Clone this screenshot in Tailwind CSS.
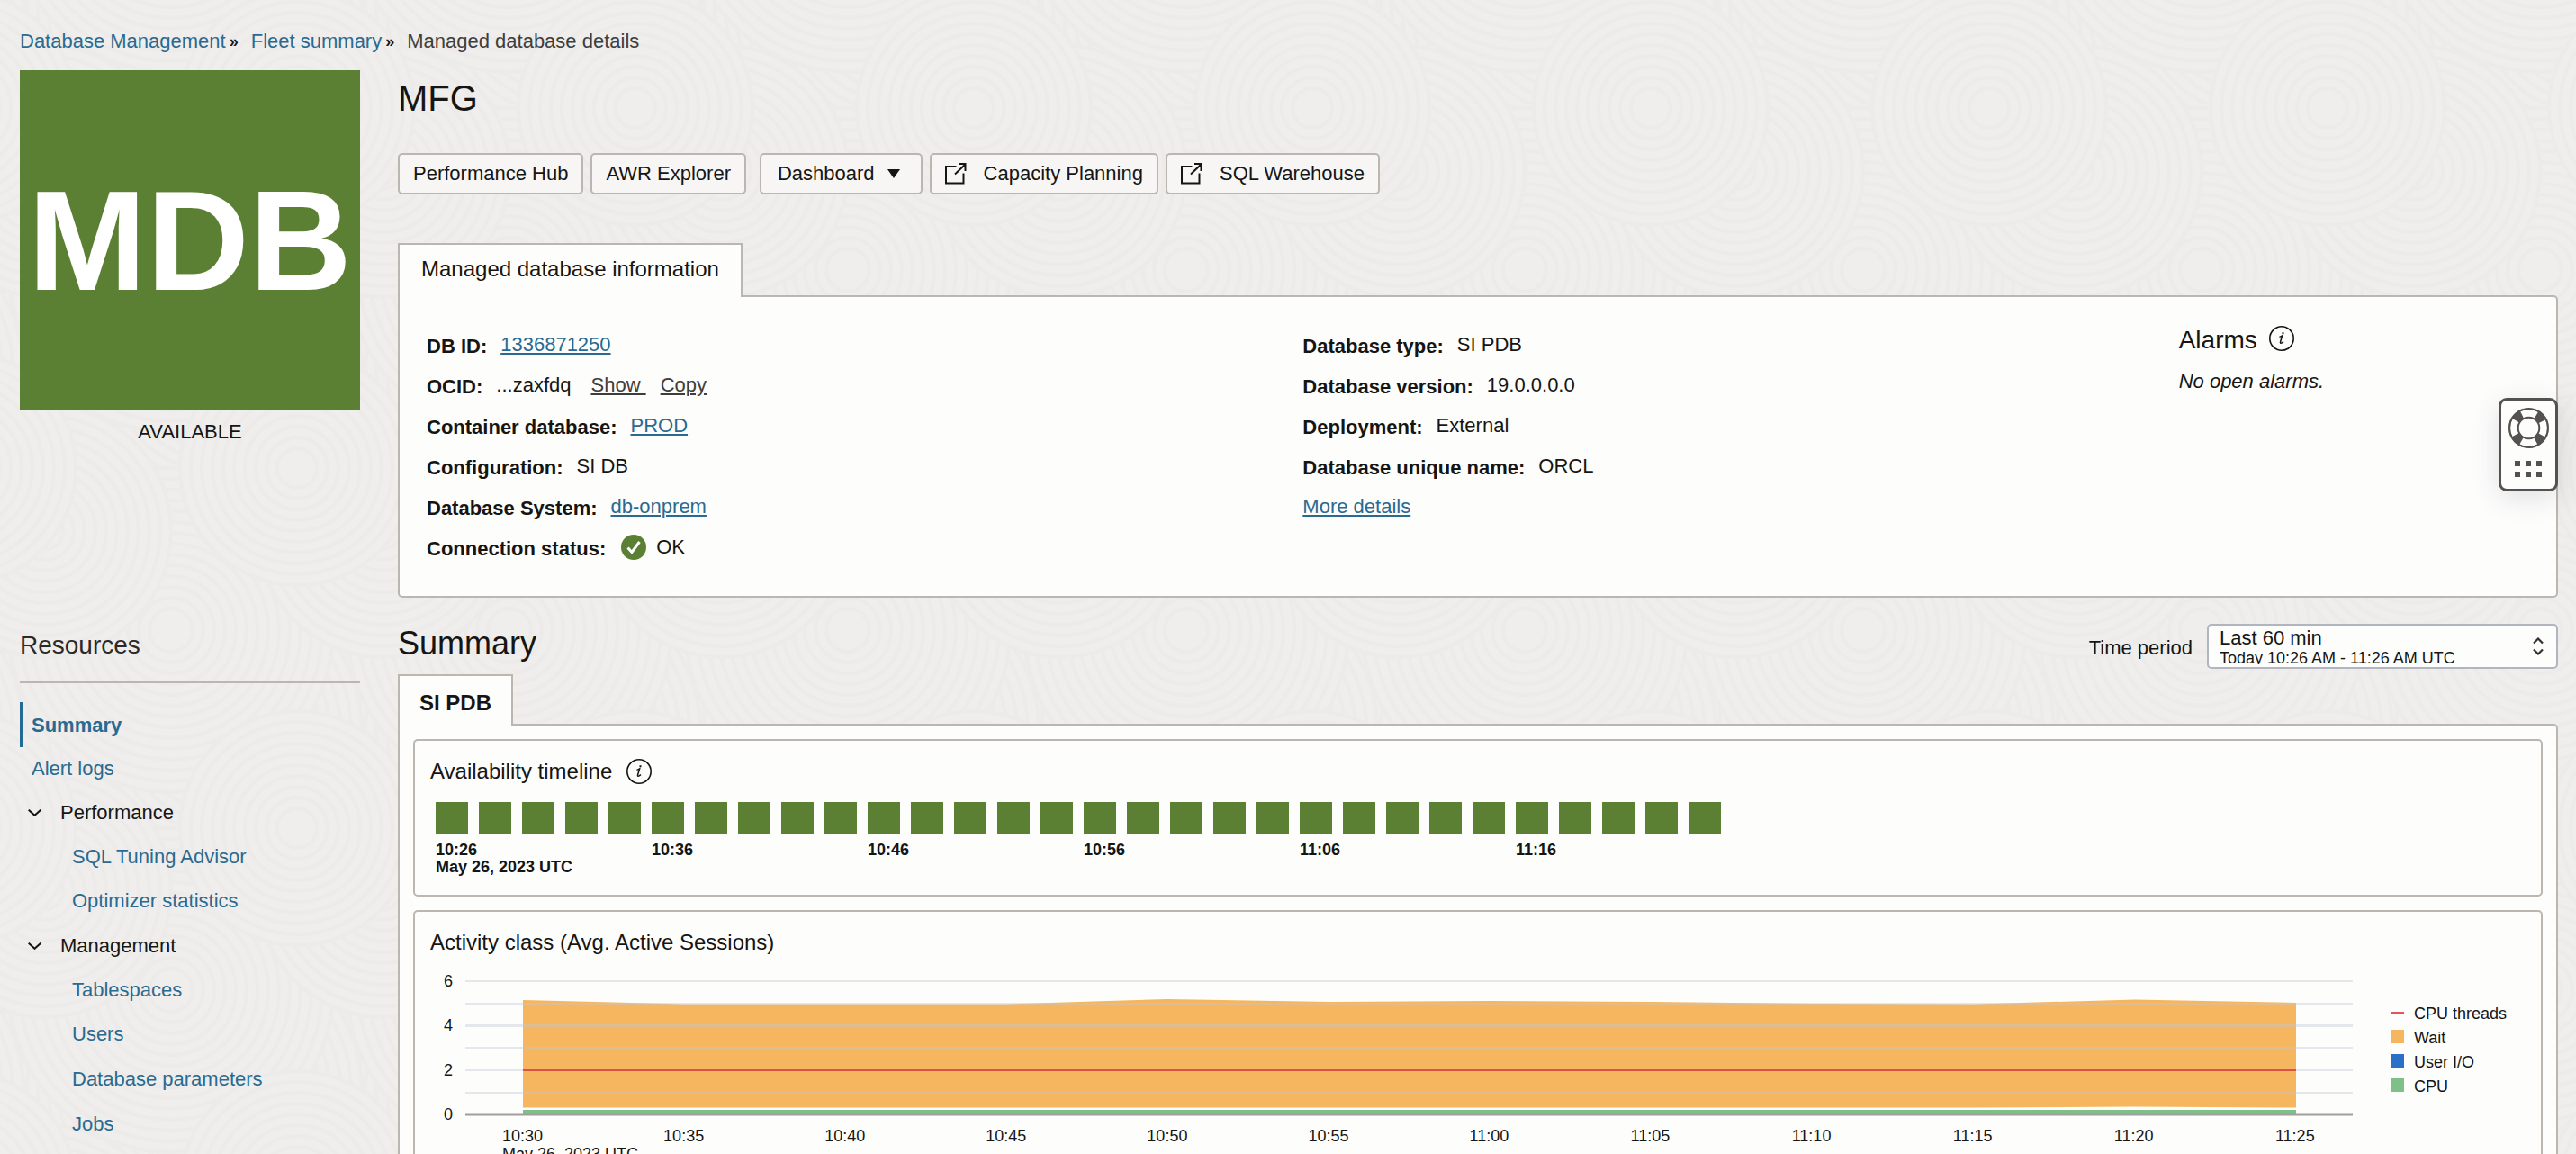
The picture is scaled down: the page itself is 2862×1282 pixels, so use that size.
<!DOCTYPE html>
<html lang="en">
<head>
<meta charset="utf-8">
<meta name="viewport" content="width=device-width, initial-scale=1">
<title>Managed database details</title>
<script src="https://cdn.jsdelivr.net/npm/@tailwindcss/browser@4"></script>
</head>
<body class="bg-[#efeeec] font-['Liberation_Sans',Arial,sans-serif] text-[22px] leading-[24px] text-[#161513]">
<div class="relative isolate h-screen overflow-hidden">

<!-- Topographic ring texture behind the page -->
<svg class="absolute inset-0 -z-10 h-full w-full" aria-hidden="true">
  <defs><pattern id="rings" width="376" height="400" patternUnits="userSpaceOnUse"></pattern></defs>
  <rect width="100%" height="100%" fill="url(#rings)"></rect>
</svg>

<div class="pt-[34px] pl-[22px] pr-[20px]">
  <nav aria-label="Breadcrumb" class="flex items-center">
    <a href="#" class="text-[#2a6a91]">Database Management</a>
    <span class="ml-[4px] mr-[14px] text-[18px] font-bold">»</span>
    <a href="#" class="text-[#2a6a91]">Fleet summary</a>
    <span class="ml-[4px] mr-[14px] text-[18px] font-bold">»</span>
    <span class="text-[#403e3c]">Managed database details</span>
  </nav>

  <div class="mt-[20px] flex gap-[42px]">
    <aside class="w-[378px] shrink-0">
      <div class="flex aspect-square items-center justify-center bg-[#5b8033] text-[158px] leading-none font-bold text-white">MDB</div>
      <p class="mt-[12px] text-center">AVAILABLE</p>

      <h2 class="mt-[209px] border-b-2 border-[#bcb6b1] pb-[24px] text-[28px] leading-[32px] text-[#2b2a28]">Resources</h2>
      <nav aria-label="Resources" class="mt-[21px] flex flex-col text-[#2a6a91]">
        <a href="#" class="flex h-[50px] items-center border-l-3 border-[#226b92] pt-[2px] pl-[10px] font-bold">Summary</a>
        <a href="#" class="flex h-[48px] items-center pl-[13px]">Alert logs</a>
        <button type="button" class="flex h-[50px] items-center pl-[9px] text-[#161513]">
          <svg class="mr-[21px] h-[8px] w-[15px]" viewBox="0 0 15 8" fill="none" stroke="currentColor" stroke-width="2"><path d="M0.7 0.7L7.5 6.8L14.3 0.7"/></svg>Performance</button>
        <a href="#" class="flex h-[48px] items-center pl-[58px]">SQL Tuning Advisor</a>
        <a href="#" class="flex h-[50px] items-center pl-[58px]">Optimizer statistics</a>
        <button type="button" class="flex h-[50px] items-center pl-[9px] text-[#161513]">
          <svg class="mr-[21px] h-[8px] w-[15px]" viewBox="0 0 15 8" fill="none" stroke="currentColor" stroke-width="2"><path d="M0.7 0.7L7.5 6.8L14.3 0.7"/></svg>Management</button>
        <a href="#" class="flex h-[48px] items-center pl-[58px]">Tablespaces</a>
        <a href="#" class="flex h-[50px] items-center pl-[58px]">Users</a>
        <a href="#" class="flex h-[50px] items-center pl-[58px]">Database parameters</a>
        <a href="#" class="flex h-[50px] items-center pl-[58px]">Jobs</a>
      </nav>
    </aside>

    <main class="min-w-0 flex-1">
      <h1 class="pt-[7px] text-[40px] leading-[48px]">MFG</h1>

      <div class="mt-[37px] flex gap-[8px]">
        <button type="button" class="h-[46px] rounded-[5px] border-2 border-[#bcb6b1] bg-[#f7f6f5] px-[15px]">Performance Hub</button>
        <button type="button" class="h-[46px] rounded-[5px] border-2 border-[#bcb6b1] bg-[#f7f6f5] px-[15px]">AWR Explorer</button>
        <button type="button" class="ml-[7px] flex h-[46px] items-center rounded-[5px] border-2 border-[#bcb6b1] bg-[#f7f6f5] pr-[23px] pl-[18px]">Dashboard
          <svg class="ml-[14px] h-[10px] w-[14px]" viewBox="0 0 14 10"><path d="M0 0H14L7 10Z" fill="#161513"/></svg></button>
        <button type="button" class="flex h-[46px] items-center rounded-[5px] border-2 border-[#bcb6b1] bg-[#f7f6f5] px-[15px]">
          <svg class="mr-[19px] h-[24px] w-[24px]" viewBox="0 0 24 24" fill="none" stroke="#161513" stroke-width="2"><path d="M12.5 4H1V22.5H20.500V11.500M15 1H22.500V9M22.500 1.500L11 12.500"/></svg>Capacity Planning</button>
        <button type="button" class="flex h-[46px] items-center rounded-[5px] border-2 border-[#bcb6b1] bg-[#f7f6f5] px-[15px]">
          <svg class="mr-[19px] h-[24px] w-[24px]" viewBox="0 0 24 24" fill="none" stroke="#161513" stroke-width="2"><path d="M12.5 4H1V22.5H20.500V11.500M15 1H22.500V9M22.500 1.500L11 12.500"/></svg>SQL Warehouse</button>
      </div>

      <div class="mt-[54px] flex">
        <button type="button" class="relative z-10 -mb-[2px] h-[60px] border-2 border-b-0 border-[#bcb6b1] bg-[#fdfdfc] px-[24px] pb-[4px] text-[24px]">Managed database information</button>
      </div>
      <section class="grid grid-cols-[5fr_5fr_2fr] rounded-[5px] rounded-tl-none border-2 border-[#bcb6b1] bg-[#fdfdfc] px-[30px] pt-[32px] pb-[30px]">
        <dl>
          <div class="flex h-[45px] items-center gap-[15px]"><dt class="font-bold">DB ID:</dt><dd class="pb-[4px]"><a href="#" class="text-[#2a6a91] underline decoration-2 underline-offset-2">1336871250</a></dd></div>
          <div class="flex h-[45px] items-center gap-[15px]"><dt class="font-bold">OCID:</dt><dd class="flex pb-[4px]"><span>...zaxfdq</span><a href="#" class="ml-[22px] whitespace-pre text-[#403e3c] underline decoration-2 underline-offset-2">Show </a><a href="#" class="ml-[16px] text-[#403e3c] underline decoration-2 underline-offset-2">Copy</a></dd></div>
          <div class="flex h-[45px] items-center gap-[15px]"><dt class="font-bold">Container database:</dt><dd class="pb-[4px]"><a href="#" class="text-[#2a6a91] underline decoration-2 underline-offset-2">PROD</a></dd></div>
          <div class="flex h-[45px] items-center gap-[15px]"><dt class="font-bold">Configuration:</dt><dd class="pb-[4px]">SI DB</dd></div>
          <div class="flex h-[45px] items-center gap-[15px]"><dt class="font-bold">Database System:</dt><dd class="pb-[4px]"><a href="#" class="text-[#2a6a91] underline decoration-2 underline-offset-2">db-onprem</a></dd></div>
          <div class="flex h-[45px] items-center gap-[15px]"><dt class="font-bold">Connection status:</dt><dd class="flex items-center gap-[11px] pb-[4px] pl-[2px]">
            <svg class="h-[28px] w-[28px]" viewBox="0 0 28 28"><circle cx="14" cy="14" r="14" fill="#5b8033"/><path d="M7.500 14.500L12 19.500L20.500 8" fill="none" stroke="#fff" stroke-width="3"/></svg>OK</dd></div>
        </dl>
        <dl>
          <div class="flex h-[45px] items-center gap-[15px]"><dt class="font-bold">Database type:</dt><dd class="pb-[4px]">SI PDB</dd></div>
          <div class="flex h-[45px] items-center gap-[15px]"><dt class="font-bold">Database version:</dt><dd class="pb-[4px]">19.0.0.0.0</dd></div>
          <div class="flex h-[45px] items-center gap-[15px]"><dt class="font-bold">Deployment:</dt><dd class="pb-[4px]">External</dd></div>
          <div class="flex h-[45px] items-center gap-[15px]"><dt class="font-bold">Database unique name:</dt><dd class="pb-[4px]">ORCL</dd></div>
          <div class="flex h-[45px] items-center"><dd class="pb-[4px]"><a href="#" class="text-[#2a6a91] underline decoration-2 underline-offset-2">More details</a></dd></div>
        </dl>
        <div>
          <div class="flex items-start gap-[13px]">
            <h3 class="text-[28px] leading-[32px]">Alarms</h3>
            <svg class="h-[28px] w-[28px]" viewBox="0 0 28 28" fill="none" stroke="#161513"><circle cx="14" cy="14" r="13.200" stroke-width="1.600"/><path d="M11.500 12.300C12.500 12.200 13.500 11.600 14.600 11L12.500 18C12.200 19.400 13 19.600 14.200 18.900L16 17.600" stroke-width="1.500"/><path d="M14.500 8.200H16.500" stroke-width="2"/></svg>
          </div>
          <p class="mt-[18px] italic">No open alarms.</p>
        </div>
      </section>

      <div class="mt-[29px] flex items-start justify-between">
        <h2 class="pt-[2px] text-[36px] leading-[40px]">Summary</h2>
        <div class="flex items-center gap-[16px]">
          <label for="period" class="pt-[4px]">Time period</label>
          <div class="relative h-[50px] w-[390px] rounded-[5px] border-2 border-[#b0b5c0] bg-[#fdfdfc] pl-[12px]">
            <select id="period" class="block h-[26px] w-full appearance-none bg-transparent pt-[2px] outline-none"><option>Last 60 min</option><option>Last 24 hours</option><option>Last 7 days</option></select>
            <p class="h-[17px] overflow-hidden text-[18px] leading-[20px]">Today 10:26 AM - 11:26 AM UTC</p>
            <svg class="pointer-events-none absolute top-[13px] right-[14px] h-[20px] w-[12px]" viewBox="0 0 12 20" fill="none" stroke="#33312f" stroke-width="2.200"><path d="M1 6.500L6 1.500L11 6.500M1 13.500L6 18.500L11 13.500"/></svg>
          </div>
        </div>
      </div>

      <div class="mt-[6px] flex">
        <button type="button" class="relative z-10 -mb-[2px] h-[57px] border-2 border-b-0 border-[#bcb6b1] bg-[#fdfdfc] px-[22px] pt-[4px] text-[24px] font-bold">SI PDB</button>
      </div>
      <section class="rounded-[5px] rounded-tl-none border-2 border-[#bcb6b1] bg-[#fdfdfc] p-[15px]">
        <div class="rounded-[5px] border-2 border-[#bcb6b1] px-[17px] pt-[20px] pb-[21px]">
          <div class="flex items-center gap-[16px]">
            <h3 class="text-[24px] leading-[28px]">Availability timeline</h3>
            <svg class="h-[28px] w-[28px]" viewBox="0 0 28 28" fill="none" stroke="#161513"><circle cx="14" cy="14" r="13.200" stroke-width="1.600"/><path d="M11.500 12.300C12.500 12.200 13.500 11.600 14.600 11L12.500 18C12.200 19.400 13 19.600 14.200 18.900L16 17.600" stroke-width="1.500"/><path d="M14.500 8.200H16.500" stroke-width="2"/></svg>
          </div>
          <div id="timeline" class="mt-[20px] flex gap-[12px] pl-[6px]"></div>
          <div class="mt-[8px] flex pl-[6px] text-[18px] leading-[19px] font-bold">
            <span class="w-[240px]">10:26<br>May 26, 2023 UTC</span>
            <span class="w-[240px]">10:36</span>
            <span class="w-[240px]">10:46</span>
            <span class="w-[240px]">10:56</span>
            <span class="w-[240px]">11:06</span>
            <span class="w-[240px]">11:16</span>
          </div>
        </div>

        <div class="mt-[15px] rounded-[5px] border-2 border-[#bcb6b1] px-[17px] pt-[20px] pb-[40px]">
          <h3 class="text-[24px] leading-[28px]">Activity class (Avg. Active Sessions)</h3>
          <div class="mt-[19px] flex gap-[16px] pl-[13px] text-[18px] leading-[20px]">
            <div class="min-w-0 flex-1">
              <div class="flex h-[168px] pr-[26px]">
                <div class="flex w-[26px] shrink-0 flex-col justify-between pr-[14px] text-right">
                  <span>6</span><span>4</span><span>2</span><span>0</span>
                </div>
                <svg class="mt-[8px] h-[152px] min-w-0 flex-1" viewBox="0 0 2097 152" preserveAspectRatio="none" role="img" aria-label="Average active sessions by class">
                  <path fill="#f5b65f" d="M64 23L243 27.500L422 27.500L601 27.500L780 22L960 25L1139 24L1318 25L1497 27L1676 27.500L1855 22.500L2034 26V142.500L1855 141.500L1676 142.500H64Z"/>
                  <path fill="#7fbf88" d="M64 145H2034V150H64Z"/>
                  <path fill="none" stroke="#c0c8d3" stroke-opacity=".42" stroke-width="2" d="M0 2H2097M0 27H2097M0 76H2097M0 101H2097M0 126H2097"/>
                  <path fill="none" stroke="#c0c8d3" stroke-opacity=".42" stroke-width="3" d="M0 51.500H2097"/>
                  <path fill="none" stroke="#dc5346" stroke-width="2" d="M64 101H2034"/>
                  <path fill="none" stroke="#a09f9d" stroke-width="2" d="M0 150.500H2097"/>
                </svg>
              </div>
              <div class="mt-[4px] grid grid-cols-12">
                <span class="mx-auto w-[45px] whitespace-nowrap">10:30<br>May 26, 2023 UTC</span>
                <span class="mx-auto w-[45px]">10:35</span>
                <span class="mx-auto w-[45px]">10:40</span>
                <span class="mx-auto w-[45px]">10:45</span>
                <span class="mx-auto w-[45px]">10:50</span>
                <span class="mx-auto w-[45px]">10:55</span>
                <span class="mx-auto w-[45px]">11:00</span>
                <span class="mx-auto w-[45px]">11:05</span>
                <span class="mx-auto w-[45px]">11:10</span>
                <span class="mx-auto w-[45px]">11:15</span>
                <span class="mx-auto w-[45px]">11:20</span>
                <span class="mx-auto w-[45px]">11:25</span>
              </div>
            </div>
            <ul class="mt-[33px] w-[150px] shrink-0 leading-[27px]">
              <li class="flex items-start gap-[11px]"><span class="mt-[11px] h-[2px] w-[15px] bg-[#e0565b]"></span>CPU threads</li>
              <li class="flex items-start gap-[11px]"><span class="mt-[4px] h-[15px] w-[15px] bg-[#f5b65f]"></span>Wait</li>
              <li class="flex items-start gap-[11px]"><span class="mt-[4px] h-[15px] w-[15px] bg-[#2a70c6]"></span>User I/O</li>
              <li class="flex items-start gap-[11px]"><span class="mt-[4px] h-[15px] w-[15px] bg-[#7fbf88]"></span>CPU</li>
            </ul>
          </div>
        </div>
      </section>
    </main>
  </div>
</div>

<!-- Floating help launcher -->
<button type="button" aria-label="Help" class="absolute top-[442px] right-[20px] z-20 flex h-[104px] w-[66px] flex-col items-center gap-[14px] rounded-[9px] border-3 border-[#55514e] bg-[#fdfdfc] pt-[8px] shadow-[0_8px_30px_rgba(60,60,90,0.14)]">
  <svg class="h-[45px] w-[45px]" viewBox="0 0 45 45" fill="none">
    <circle cx="22.500" cy="22.500" r="17" stroke="#55514e" stroke-width="10"/>
    <circle cx="22.500" cy="22.500" r="16.500" stroke="#fdfdfc" stroke-width="8" stroke-dasharray="16.500 9.420" stroke-dashoffset="8.250"/>
    <circle cx="22.500" cy="22.500" r="21.500" stroke="#55514e" stroke-width="2"/>
    <circle cx="22.500" cy="22.500" r="11.800" stroke="#55514e" stroke-width="2"/>
  </svg>
  <svg class="h-[18px] w-[30px]" viewBox="0 0 30 18" fill="#55514e"><path d="M0 0H6V6H0ZM12 0H18V6H12ZM24 0H30V6H24ZM0 12H6V18H0ZM12 12H18V18H12ZM24 12H30V18H24Z"/></svg>
</button>
</div>

<script>
  // Overlapping discs of concentric rings, repeated at the tile's edges so that the pattern joins up
  const rings = document.getElementById('rings');
  const discs = [[0, 190, 200], [240, 10, 210], [190, 300, 180], [50, 190, 140], [330, 120, 130]];
  let markup = '<rect width="376" height="400" fill="#efeeec"/>';
  for (const [cx, cy, max] of discs)
    for (const dx of [-376, 0, 376])
      for (const dy of [-400, 0, 400])
        for (let r = max; r > 12; r -= 12)
          markup += `<circle cx="${cx + dx}" cy="${cy + dy}" r="${r}" fill="#efeeec" stroke="#ecebe9" stroke-width="4"/>`;
  rings.innerHTML = markup;

  const timeline = document.getElementById('timeline');
  for (let i = 0; i < 30; i++) {
    const block = document.createElement('span');
    block.className = 'h-[36px] w-[36px] shrink-0 bg-[#5b8033]';
    timeline.append(block);
  }
</script>
</body>
</html>
